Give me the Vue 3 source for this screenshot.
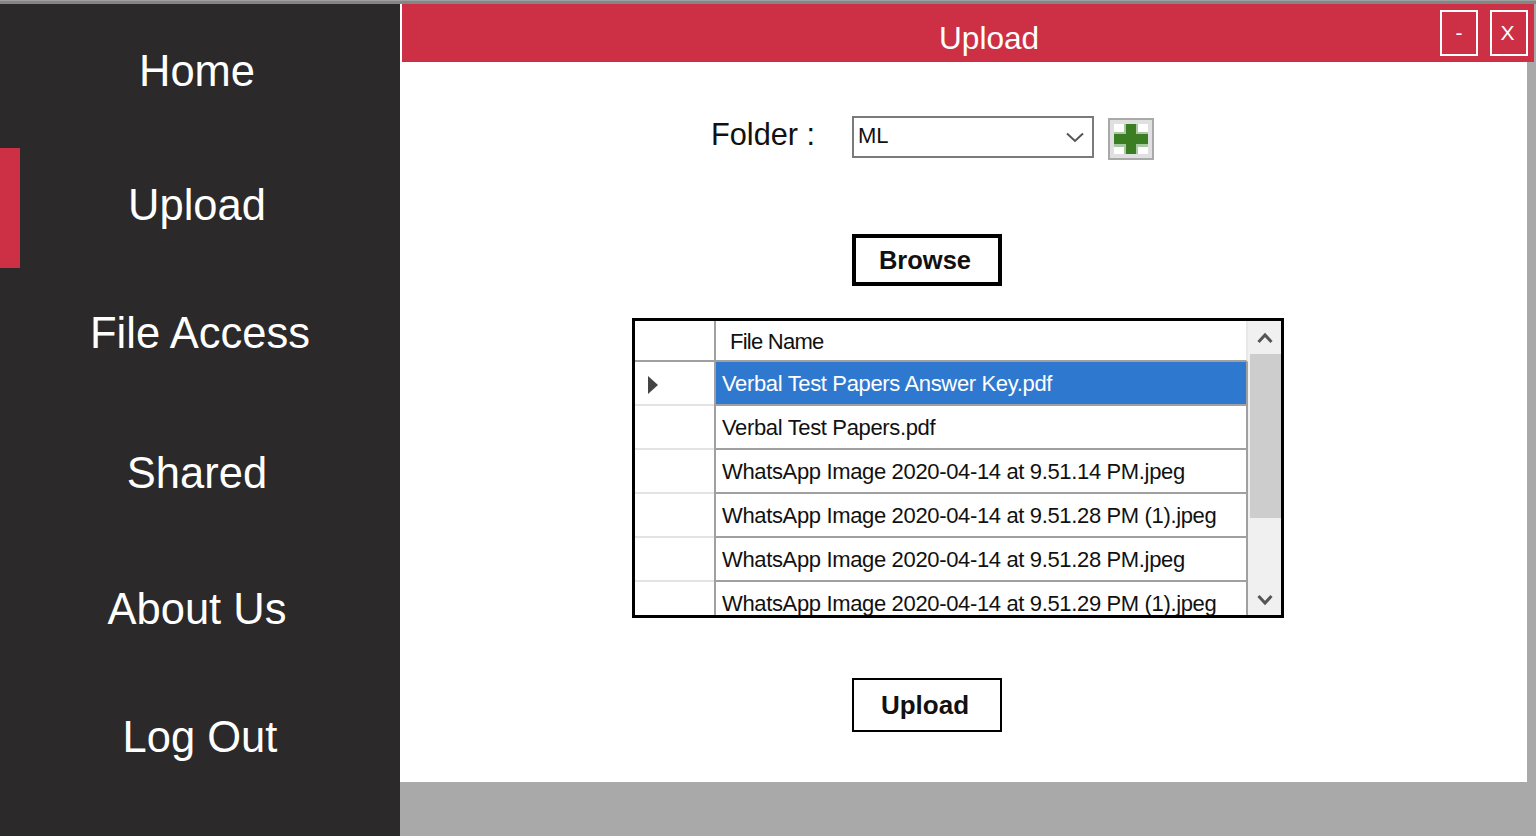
<template>
  <div class="app">
    <div class="top-strip"></div>
    <div class="shell">
      <nav class="sidebar">
        <a
          v-for="item in navItems"
          :key="item.label"
          :class="['nav-item', { 'nav-active': item.active, 'nav-centered': item.centered }]"
        >{{ item.label }}</a>
      </nav>

      <main class="main">
        <section class="window">
          <header class="title-bar">
            <span class="title">Upload</span>
            <div class="window-btns">
              <button class="win-btn" type="button">-</button>
              <button class="win-btn close" type="button">X</button>
            </div>
          </header>

          <div class="content">
            <div class="folder-row">
              <label class="folder-label">Folder :</label>
              <div class="combo">
                <span class="combo-value">ML</span>
                <svg class="combo-arrow" width="18" height="11" viewBox="0 0 18 11">
                  <path d="M1 1.5 L9 9 L17 1.5" fill="none" stroke="#555" stroke-width="2" />
                </svg>
              </div>
              <button class="add-btn" type="button" aria-label="Add folder">
                <svg width="34" height="30" viewBox="0 0 34 30">
                  <rect width="34" height="30" fill="#fff" />
                  <rect x="0" y="8" width="34" height="15" fill="#a9c9a3" />
                  <rect x="10" y="0" width="14" height="30" fill="#a9c9a3" />
                  <rect x="0" y="10" width="34" height="10" fill="#3a7d22" />
                  <rect x="12" y="0" width="10" height="30" fill="#3a7d22" />
                </svg>
              </button>
            </div>

            <button class="action-btn browse" type="button">Browse</button>

            <div class="grid">
              <div class="table">
                <div class="row head-row">
                  <div class="row-head"></div>
                  <div class="cell head-cell">File Name</div>
                </div>
                <div
                  v-for="(file, i) in files"
                  :key="file"
                  :class="['row', { selected: i === 0 }]"
                >
                  <div class="row-head">
                    <svg v-if="i === 0" width="10" height="18" viewBox="0 0 10 18">
                      <polygon points="0,0 10,9 0,18" fill="#444" />
                    </svg>
                  </div>
                  <div class="cell">{{ file }}</div>
                </div>
              </div>
              <div class="scrollbar">
                <svg class="scroll-arrow" width="16" height="12" viewBox="0 0 16 12">
                  <path d="M1.5 10 L8 3 L14.5 10" fill="none" stroke="#555" stroke-width="3" />
                </svg>
                <div class="scroll-track">
                  <div class="scroll-thumb"></div>
                </div>
                <svg class="scroll-arrow" width="16" height="12" viewBox="0 0 16 12">
                  <path d="M1.5 2 L8 9 L14.5 2" fill="none" stroke="#555" stroke-width="3" />
                </svg>
              </div>
            </div>

            <button class="action-btn upload" type="button">Upload</button>
          </div>
        </section>
      </main>
    </div>
  </div>
</template>

<script setup>
const navItems = [
  { label: 'Home' },
  { label: 'Upload', active: true },
  { label: 'File Access', centered: true },
  { label: 'Shared' },
  { label: 'About Us' },
  { label: 'Log Out', centered: true }
]

const files = [
  'Verbal Test Papers Answer Key.pdf',
  'Verbal Test Papers.pdf',
  'WhatsApp Image 2020-04-14 at 9.51.14 PM.jpeg',
  'WhatsApp Image 2020-04-14 at 9.51.28 PM (1).jpeg',
  'WhatsApp Image 2020-04-14 at 9.51.28 PM.jpeg',
  'WhatsApp Image 2020-04-14 at 9.51.29 PM (1).jpeg'
]
</script>

<style scoped>
.app {
  width: 1536px;
  height: 836px;
  display: flex;
  flex-direction: column;
  overflow: hidden;
  font-family: "Liberation Sans", Arial, sans-serif;
  background: #a9a9a9;
}

.top-strip {
  height: 4px;
  flex: none;
  background: linear-gradient(#a0a0a0 0 1px, #858585 1px);
}

.shell {
  flex: 1;
  display: flex;
  min-height: 0;
}

/* Sidebar */
.sidebar {
  width: 400px;
  flex: none;
  display: grid;
  grid-template-rows: 132px 136px 120px 160px 112px 144px 28px;
  background: #2b292a;
}

.nav-item {
  position: relative;
  display: flex;
  align-items: center;
  justify-content: center;
  padding: 2px 6px 0 0;
  color: #fff;
  font-size: 43.5px;
}

.nav-centered {
  padding-right: 0;
}

.nav-active::before {
  content: "";
  position: absolute;
  left: 0;
  top: 12px;
  width: 20px;
  height: 120px;
  background: #cd3044;
}

/* Window */
.main {
  flex: 1;
  min-width: 0;
}

.window {
  width: 1127px;
  height: 778px;
  display: flex;
  flex-direction: column;
  background: #fff;
}

.title-bar {
  flex: none;
  width: 1132px;
  height: 58px;
  margin-left: 2px;
  padding: 6px 6px 0 537px;
  box-sizing: border-box;
  display: flex;
  align-items: flex-start;
  background: #cd3044;
  color: #fff;
}

.title {
  margin-top: 10px;
  font-size: 31.6px;
  line-height: 36px;
}

.window-btns {
  margin-left: auto;
  display: flex;
  gap: 12px;
}

.win-btn {
  width: 38px;
  height: 46px;
  padding: 0;
  border: 2px solid #fff;
  background: transparent;
  color: #fff;
  font-family: inherit;
  font-size: 21px;
}

.close {
  padding-right: 3px;
}

.content {
  flex: 1;
  padding: 54px 0 0 232px;
  display: flex;
  flex-direction: column;
  align-items: flex-start;
}

/* Folder row */
.folder-row {
  margin-left: 79px;
  height: 44px;
  display: flex;
  align-items: flex-start;
}

.folder-label {
  width: 141px;
  padding-top: 1px;
  color: #111;
  font-size: 30.7px;
  line-height: 36px;
}

.combo {
  width: 242px;
  height: 42px;
  box-sizing: border-box;
  border: 2px solid #7a7a7a;
  padding: 0 8px 0 4px;
  display: flex;
  align-items: center;
  justify-content: space-between;
}

.combo-value {
  font-size: 22px;
  color: #111;
  margin-top: -3px;
}

.add-btn {
  width: 46px;
  height: 42px;
  margin: 2px 0 0 14px;
  padding: 0;
  box-sizing: border-box;
  border: 2px solid #a9a9a9;
  background: #e0e0e0;
  display: flex;
  align-items: center;
  justify-content: center;
}

/* Buttons */
.action-btn {
  width: 150px;
  margin-left: 220px;
  padding: 0 4px 0 0;
  box-sizing: border-box;
  background: #fff;
  color: #111;
  font-family: inherit;
  font-weight: 700;
}

.browse {
  height: 52px;
  margin-top: 74px;
  border: 4px solid #000;
  font-size: 25.5px;
}

.upload {
  height: 54px;
  margin-top: 60px;
  border: 2px solid #000;
  font-size: 26px;
}

/* File grid */
.grid {
  width: 652px;
  height: 300px;
  margin-top: 32px;
  box-sizing: border-box;
  border: 3px solid #000;
  display: flex;
  overflow: hidden;
}

.table {
  width: 613px;
  flex: none;
}

.row {
  height: 44px;
  box-sizing: border-box;
  display: flex;
  color: #111;
  font-size: 22px;
  letter-spacing: -0.35px;
}

.head-row {
  height: 41px;
  letter-spacing: -0.75px;
}

.row-head {
  width: 79px;
  flex: none;
  box-sizing: border-box;
  padding: 12px 0 0 13px;
  border-bottom: 2px solid #e3e3e3;
}

.head-row .row-head {
  border-bottom-color: #a0a0a0;
}

.cell {
  flex: 1;
  box-sizing: border-box;
  padding: 2px 0 0 6px;
  display: flex;
  align-items: center;
  white-space: nowrap;
  overflow: hidden;
  border-left: 2px solid #a0a0a0;
  border-right: 2px solid #a0a0a0;
  border-bottom: 2px solid #a0a0a0;
}

.head-cell {
  padding-left: 14px;
  border-right-color: #e8e8e8;
}

.selected .cell {
  background: #2f78d0;
  color: #fff;
}

.scrollbar {
  width: 33px;
  flex: none;
  display: flex;
  flex-direction: column;
  align-items: center;
  background: #f0f0f0;
  padding-top: 11px;
  box-sizing: border-box;
}

.scroll-track {
  width: 100%;
  height: 250px;
  box-sizing: border-box;
  padding: 10px 0 0 2px;
}

.scroll-thumb {
  height: 164px;
  background: #cdcdcd;
}
</style>

<style>
body {
  background: #a9a9a9;
}
</style>
